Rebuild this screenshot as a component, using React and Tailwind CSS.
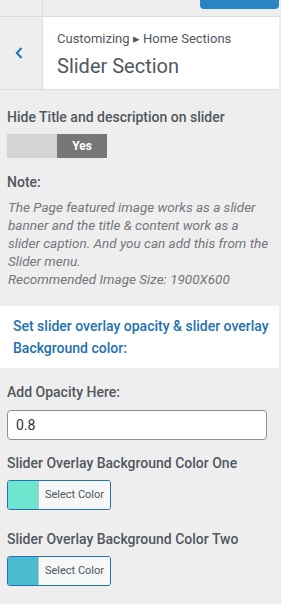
export default function App() {
  return (
    <div className="w-[281px] h-[604px] overflow-hidden bg-[#eeeeee] font-['Roboto',sans-serif] text-[#50575e]">
      {/* top bar */}
      <div className="flex h-[17px] border-b border-[#dcdcde]">
        <div className="w-[43px] border-r border-[#dcdcde]" />
        <div className="flex flex-1 justify-end pr-[2px]">
          <div className="h-[9px] w-[79px] rounded-b-[4px] bg-[#2a84c4]" />
        </div>
      </div>
      {/* header */}
      <div className="flex h-[73px] border-b border-[#dcdcde]">
        <div className="flex w-[43px] items-center justify-center border-r border-[#dcdcde]">
          <svg width="10" height="14" viewBox="0 0 10 14" className="-ml-[5px]">
            <path d="M7.5 2 L2.8 7 L7.5 12" fill="none" stroke="#2271b1" strokeWidth="2" />
          </svg>
        </div>
        <div className="mr-[2px] flex-1 bg-white pl-[14px] pt-[13px]">
          <div className="text-[13px] leading-[18px]">Customizing ▸ Home Sections</div>
          <div className="mt-[5px] text-[20px] leading-[26px]">Slider Section</div>
        </div>
      </div>
      {/* content */}
      <div className="pt-[17px]">
        <div className="px-[7px]">
          <div className="text-[14px] font-medium leading-[20px]">Hide Title and description on slider</div>
          <div className="mt-[7px] flex h-[24px] w-[100px]">
            <div className="w-[50px] bg-[#d4d4d4]" />
            <div className="flex w-[50px] items-center justify-center bg-[#777777] text-[12px] font-bold text-white">Yes</div>
          </div>
          <div className="mt-[14px] text-[14px] font-medium leading-[20px]">Note:</div>
          <div className="mt-[6px] pl-[1px] pr-[3px] text-[13.5px] italic leading-[18px] text-[#72777c]">
            The Page featured image works as a slider banner and the title &amp; content work as a slider caption. And you can add this from the Slider menu.
            <br />
            Recommended Image Size: 1900X600
          </div>
        </div>
        <div className="mr-[2px] mt-[18px] bg-white pl-[13px] pr-[4px] py-[9px] text-[14px] font-medium leading-[22px] text-[#2271b1]">
          Set slider overlay opacity &amp; slider overlay Background color:
        </div>
        <div className="px-[7px] pt-[14px]">
          <div className="text-[14px] font-medium leading-[20px]">Add Opacity Here:</div>
          <div className="mt-[8px] flex h-[30px] w-[260px] items-center rounded-[4px] border border-[#8c8f94] bg-white pl-[8px] text-[14px] text-[#2c3338]">0.8</div>
          <div className="mt-[13px] text-[14px] font-medium leading-[20px]">Slider Overlay Background Color One</div>
          <div className="mt-[7px] flex h-[30px] w-[104px] overflow-hidden rounded-[3px] border border-[#2271b1]">
            <div className="w-[31px] border-r border-[#c3c4c7] bg-[#6ee6cf]" />
            <div className="flex flex-1 items-center justify-center bg-[#f6f7f7] text-[11px] text-[#50575e]">Select Color</div>
          </div>
          <div className="mt-[19px] text-[14px] font-medium leading-[20px]">Slider Overlay Background Color Two</div>
          <div className="mt-[7px] flex h-[30px] w-[104px] overflow-hidden rounded-[3px] border border-[#2271b1]">
            <div className="w-[31px] border-r border-[#c3c4c7] bg-[#4bbccf]" />
            <div className="flex flex-1 items-center justify-center bg-[#f6f7f7] text-[11px] text-[#50575e]">Select Color</div>
          </div>
        </div>
      </div>
    </div>
  );
}
